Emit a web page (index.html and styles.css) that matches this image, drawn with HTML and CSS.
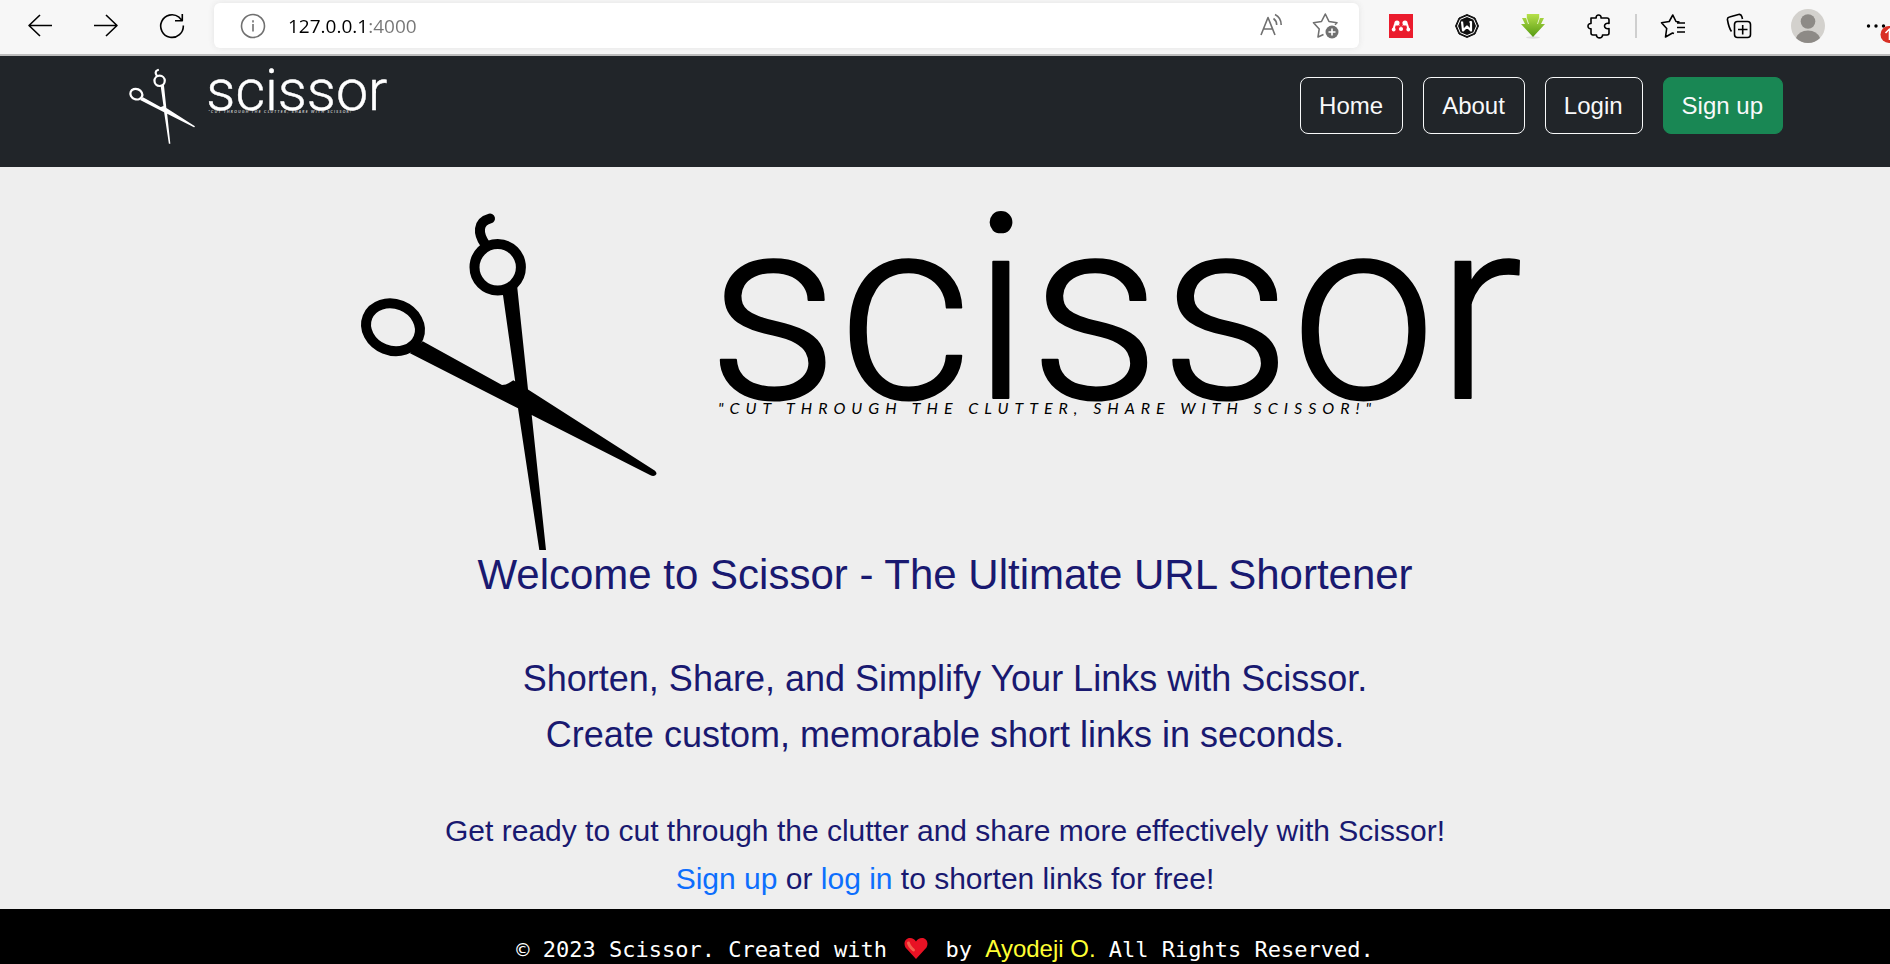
FILE: index.html
```html
<!DOCTYPE html>
<html lang="en">
<head>
<meta charset="utf-8">
<title>Scissor</title>
<link rel="stylesheet" href="styles.css">
</head>
<body>
<header class="browser-bar">
  <div class="nav-tools">
    <button class="tool" aria-label="Back"><svg width="26" height="26" viewBox="0 0 26 26"><path d="M25 12.500H2M13 2 2 12.500 13 23"/></svg></button>
    <button class="tool" aria-label="Forward"><svg width="26" height="26" viewBox="0 0 26 26"><path d="M1 12.500h23M13 2l11 10.500L13 23"/></svg></button>
    <button class="tool" aria-label="Refresh"><svg width="26" height="26" viewBox="0 0 26 26"><path d="M24.300 12.500A11.300 11.300 0 1 1 20 4.200L23 7.500M23.300 1v6.700H16"/></svg></button>
  </div>
  <div class="address">
    <svg class="grey" width="26" height="26" viewBox="0 0 26 26"><circle cx="13" cy="13" r="11.500"/><path d="M13 11v7.500M13 7.200v2.200"/></svg>
    <input class="url" type="text" aria-label="Address" value="127.0.0.1:4000">
    <button class="tool grey" aria-label="Read aloud"><svg width="26" height="26" viewBox="0 0 26 26"><path d="M3 22 10 4.500 17 22M5.500 16h9M15.500 5.500c2 1.500 3.200 3.500 3.200 6.500M17 1.500c4 2 6.200 5.500 6.200 10.500"/></svg></button>
    <button class="tool grey" aria-label="Add to favorites"><svg width="28" height="28" viewBox="0 0 28 28"><path d="M11.500 22.500 6 25l1.200-8L1.500 10.700l8-1.200L13.300 2l3.700 7.500 8 1.200-2 2"/><circle class="badge-fill" cx="20" cy="20" r="6.500"/><path class="badge-mark" d="M16.500 20h7M20 16.500v7"/></svg></button>
  </div>
  <div class="extensions">
    <button class="tool" aria-label="Mendeley"><svg width="24" height="24" viewBox="0 0 24 24"><path fill="#eb1c2d" stroke="none" d="M0 0h24v24H0z"/><path class="thick-white" d="M5 15.500c0-4 .8-6 3-6.500l4 2.500 4-2.500c2.200.5 3 2.500 3 6.500"/><g fill="#fff" stroke="none"><circle cx="8" cy="9" r="2.600"/><circle cx="16" cy="9" r="2.600"/><circle cx="4.700" cy="15.500" r="1.900"/><circle cx="12" cy="15" r="2.100"/><circle cx="19.300" cy="15.500" r="1.900"/></g><circle cx="12" cy="10.500" r="1.800" fill="#eb1c2d" stroke="none"/></svg></button>
    <button class="tool" aria-label="Wappalyzer"><svg width="24" height="24" viewBox="0 0 24 24"><path fill="#111" stroke="#111" stroke-width="1" d="M12 .5 20 4l3.500 8L20 20l-8 3.500L4 20 .5 12 4 4z"/><path stroke="#fff" stroke-width="1" d="M12 2.500 18.700 5.300 21.500 12l-2.800 6.700L12 21.500l-6.700-2.800L2.500 12l2.800-6.700z"/><path stroke="#fff" stroke-width="2.200" d="M7 7.500 8 16.500 12 12.500 16 16.500V8H14.500"/></svg></button>
    <button class="tool" aria-label="Download helper"><svg width="26" height="26" viewBox="0 0 26 26"><defs><linearGradient id="leaf" x2="0" y2="1"><stop offset="0" stop-color="#b6e04a"/><stop offset="1" stop-color="#569a12"/></linearGradient></defs><ellipse cx="13" cy="24.500" rx="7" ry="1.200" fill="#ddd" stroke="none"/><path fill="url(#leaf)" stroke="none" d="M2 5h4V1h14v4h4l-3 6h4L13 24 1 11h4z"/><path stroke="#e9f5cd" stroke-width="1" d="M6.500 1v4l2 6M19.500 1v4l-2 6"/></svg></button>
    <button class="tool" aria-label="Extensions"><svg width="24" height="26" viewBox="0 0 24 26"><path d="M4 5h5.200c-.8-4 5.600-4 4.800 0H20q2 0 2 2v3.500c-6-1.500-6 6.500 0 5V20q0 2-2 2h-4.500c.5 3.800-6.500 3.800-6 0H6q-2 0-2-2v-4.200c-4 .3-4-5.600 0-5.300z"/></svg></button>
    <span class="separator"></span>
    <button class="tool" aria-label="Favorites"><svg width="26" height="26" viewBox="0 0 26 26"><path d="M14 20.500 12.500 20 5.500 24l1.200-8.500L1.500 9.800l7.700-1.300L12.800 2l3.200 6.500 3.500.5M17 10h8M17 14.500h8M17 19h8"/></svg></button>
    <button class="tool" aria-label="Collections"><svg width="26" height="26" viewBox="0 0 26 26"><path d="M5.500 18.500C3 15 2 10 1.500 7Q1 4.500 3.500 4l9-2.500q2.500-.7 3.300 2L16.500 6"/><rect x="8.500" y="8.500" width="16" height="16" rx="3"/><path d="M12 16.500h9.500M16.700 12v9.500"/></svg></button>
    <button class="tool avatar" aria-label="Profile"><svg width="34" height="34" viewBox="0 0 34 34"><g stroke="none"><circle cx="17" cy="17" r="17" fill="#d3d1cd"/><circle cx="17" cy="12.500" r="7.300" fill="#8d8a86"/><path d="M5 29q3-7.500 12-7.500T29 29q-5 5-12 5T5 29z" fill="#8d8a86"/></g></svg></button>
    <button class="tool more" aria-label="Settings and more"><svg width="28" height="34" viewBox="0 0 28 34"><g fill="#000" stroke="none"><circle cx="6.500" cy="17" r="1.700"/><circle cx="14" cy="17" r="1.700"/><circle cx="21.500" cy="17" r="1.700"/></g><circle cx="27" cy="25.500" r="8.500" fill="#d93025" stroke="none"/><path stroke="#fff" d="M27.500 31V20M23.500 24l4-4 4 4"/></svg></button>
  </div>
</header>
<nav class="navbar">
  <a class="brand" href="#" aria-label="Scissor home"><svg viewBox="0 0 1170 345"><use href="#logo"/></svg></a>
  <div class="links">
    <a class="btn" href="#">Home</a>
    <a class="btn" href="#">About</a>
    <a class="btn" href="#">Login</a>
    <a class="btn primary" href="#">Sign up</a>
  </div>
</nav>
<main class="hero">
  <svg class="hero-logo" viewBox="0 0 1170 345">
    <g id="logo">
      <g class="scissors">
        <circle cx="137.700" cy="62.300" r="23.200"/>
        <ellipse cx="33" cy="122.300" rx="27.500" ry="23.300" transform="rotate(22 33 122.300)"/>
        <path class="hook" d="M125 39C118 29 117 17 130 13.500"/>
        <path class="blade" d="M142.700 88 157 80 168 184.500 171.700 210 186 345H179.300L158 203.300 155 175zM50 148.300 62.700 136.300 142 180Q147 180 153.300 175.300L168 184.500 295 265.700Q298 269 295 270.500 293 271.500 290 270L171.700 210 158 203.300z"/>
      </g>
      <text class="wordmark" x="348" y="193">scissor</text>
      <text class="tagline" x="358" y="209">"CUT THROUGH THE CLUTTER, SHARE WITH SCISSOR!"</text>
    </g>
  </svg>
  <h1>Welcome to Scissor - The Ultimate URL Shortener</h1>
  <p class="lead">Shorten, Share, and Simplify Your Links with Scissor.<br>Create custom, memorable short links in seconds.</p>
  <p class="cta">Get ready to cut through the clutter and share more effectively with Scissor!<br><a href="#">Sign up</a> or <a href="#">log in</a> to shorten links for free!</p>
</main>
<footer class="footer">© 2023 Scissor. Created with <svg class="heart" viewBox="0 0 24 22"><path fill="#e81224" stroke="none" d="M12 22 1.500 10.500C-1 6 1.500 1 6 1q4 0 6 3.500Q14 1 18 1c4.500 0 7 5 4.500 9.500z"/><path stroke="#f4614d" stroke-width="3" stroke-linecap="round" d="M4.500 6Q5 9 9.500 13"/></svg> by <a href="#">Ayodeji O.</a> All Rights Reserved.</footer>
</body>
</html>
```
FILE: styles.css
```css
* { box-sizing: border-box; }
body {
  margin: 0;
  min-height: 100vh;
  display: flex;
  flex-direction: column;
  background: #eee;
  font-family: "Liberation Sans", Arial, sans-serif;
}
a { color: #0d6efd; text-decoration: none; }

/* Browser toolbar */
.browser-bar {
  display: flex;
  padding: 3px 0 6px 7px;
  background: #f7f7f7;
  border-bottom: 2px solid #bdbdbd;
  overflow: hidden;
}
.browser-bar svg { display: block; fill: none; stroke: #000; stroke-width: 1.6; stroke-linejoin: round; }
.browser-bar .grey, .browser-bar .grey svg { stroke: #707070; }
.nav-tools, .extensions, .address { display: flex; align-items: center; height: 45px; }
.tool {
  display: flex;
  justify-content: center;
  flex: none;
  width: 66px;
  padding: 0;
  border: 0;
  background: none;
}
.address {
  flex: 1;
  margin: 0 9px;
  padding: 0 6px 0 26px;
  background: #fff;
  border-radius: 6px;
  box-shadow: 0 0 6px #e4e4e4;
}
.address .tool { width: 55px; }
.url {
  flex: 1;
  min-width: 0;
  margin-left: 22px;
  padding: 0;
  border: 0;
  outline: 0;
  font: 19px "Open Sans", sans-serif;
  color: transparent;
  background: linear-gradient(90deg, #000 81px, #767676 81px);
  background-clip: text;
}
.address .badge-fill { fill: #707070; stroke: none; }
.address .badge-mark { stroke: #fff; }
.browser-bar .thick-white { stroke: #fff; stroke-width: 2; }
.separator { width: 2px; height: 24px; margin: 0 3px; background: #cfcfcf; }
.extensions .avatar { width: 72px; }
.extensions .more { width: 46px; justify-content: flex-end; }

/* Site navigation */
.navbar {
  display: flex;
  justify-content: space-between;
  align-items: flex-start;
  padding: 11px 107px 23px 129px;
  background: #212529;
}
.brand { width: 260px; color: #fff; }
.brand svg { display: block; width: 100%; overflow: visible; }
.links { display: flex; gap: 20px; padding-top: 10px; }
.btn {
  padding: 9px 18px;
  border: 1px solid #f8f9fa;
  border-radius: 8px;
  font-size: 24px;
  line-height: 37px;
  color: #f8f9fa;
}
.btn { padding: 9px 19px 9px 18px; }
.primary { background: #198754; border-color: #198754; }

/* Hero */
.hero {
  display: flex;
  flex-direction: column;
  align-items: center;
  padding: 38px 16px 6px;
  text-align: center;
  color: #191970;
}
.hero-logo { display: block; width: 100%; max-width: 1170px; overflow: visible; color: #000; }
.scissors { fill: none; stroke: currentColor; stroke-width: 10; }
.hook { stroke-linecap: round; }
.blade { fill: currentColor; stroke: none; }
.wordmark {
  font: 300 258px Roboto, sans-serif;
  fill: currentColor;
  stroke: currentColor;
  stroke-width: 2;
  stroke-linejoin: round;
}
.tagline { font: italic 16px Lato, sans-serif; letter-spacing: 6px; fill: currentColor; }
.hero h1 { margin: 0 0 51px; font-size: 42px; font-weight: 400; line-height: 50px; }
.lead { margin: 0 0 44px; font-size: 36px; line-height: 56px; }
.cta { margin: 0; font-size: 30px; line-height: 48px; }

/* Footer */
.footer {
  flex: 1;
  padding-top: 25px;
  background: #000;
  color: #fff;
  text-align: center;
  font: 22px/30px "DejaVu Sans Mono", monospace;
}
.footer a { font: 24px/30px "Liberation Sans", sans-serif; color: #ff3; }
.heart { width: 24px; height: 22px; margin: 0 4px; vertical-align: -2px; fill: none; }
```
